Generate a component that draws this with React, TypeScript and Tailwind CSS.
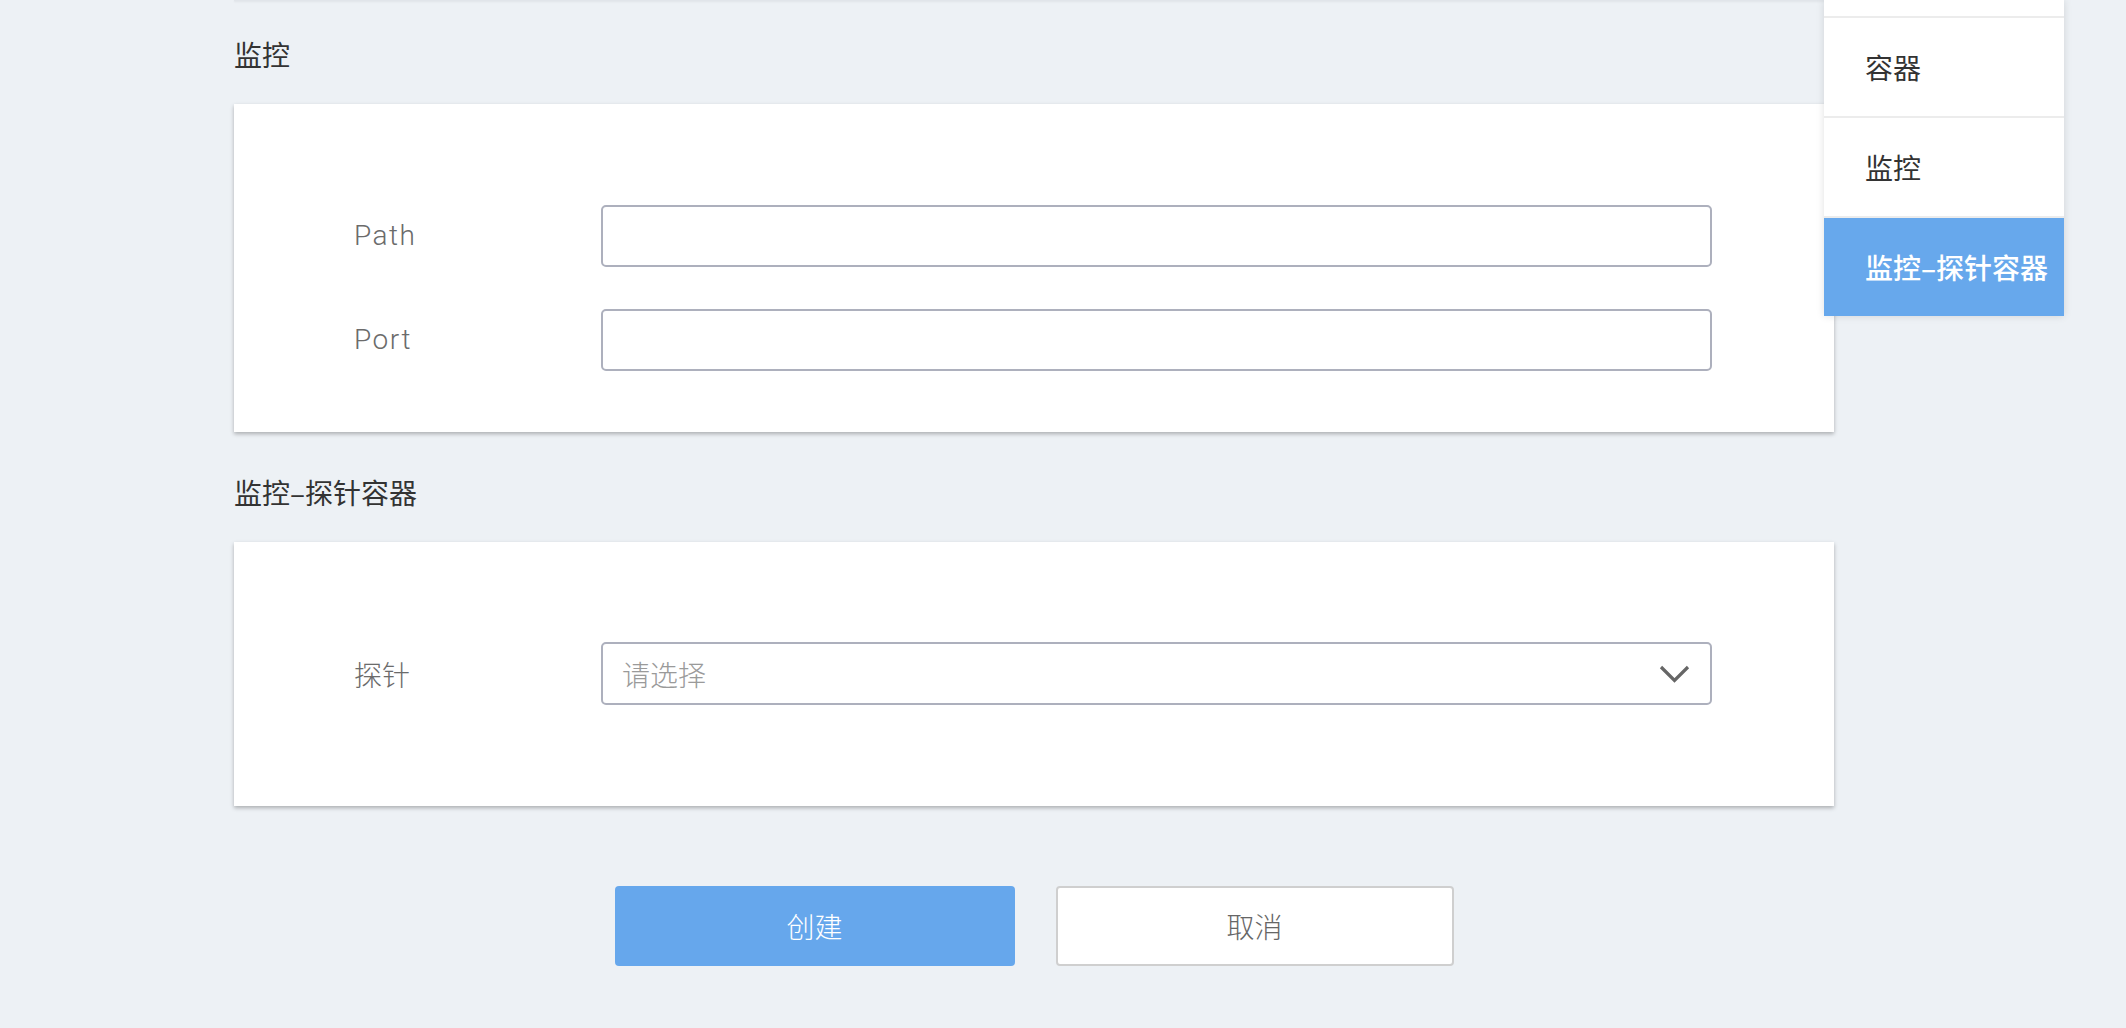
import React from "react";

const cjk = { fontFamily: '"Noto Sans CJK SC", "Noto Sans", sans-serif' };
const latin = { fontFamily: 'Roboto, "Noto Sans CJK SC", sans-serif' };

function Field({ label, latinLabel }: { label: string; latinLabel?: boolean }) {
  return (
    <div className="flex items-center">
      <div
        className="w-[367px] shrink-0 pl-[120px] text-[28px] font-light text-[#6b6b6b] tracking-[1.5px]"
        style={latinLabel ? latin : cjk}
      >
        {label}
      </div>
      <div className="h-[62px] w-[1111px] shrink-0 rounded-[5px] border-2 border-[#adb0bd] bg-white" />
    </div>
  );
}

export default function App() {
  return (
    <div className="relative h-[1028px] w-full overflow-hidden bg-[#edf1f5]" style={cjk}>
      <div className="ml-[234px] h-[1px] w-[1600px] bg-[#e1e5ea] shadow-[0_1px_2px_rgba(0,0,0,0.08)]" />

      <div className="ml-[234px] w-[1600px]">
        <div className="mt-[39px] h-[28px] text-[28px] leading-[28px] text-[#333]">监控</div>

        <div className="mt-[36px] bg-white pt-[101px] pb-[61px] shadow-[0_2px_4px_rgba(0,0,0,0.28)]">
          <div className="flex flex-col gap-[42px]">
            <Field label="Path" latinLabel />
            <Field label="Port" latinLabel />
          </div>
        </div>

        <div className="mt-[46px] h-[28px] text-[28px] leading-[28px] text-[#333]">监控–探针容器</div>

        <div className="mt-[36px] bg-white pt-[100px] pb-[101px] shadow-[0_2px_4px_rgba(0,0,0,0.28)]">
          <div className="flex items-center">
            <div className="w-[367px] shrink-0 pl-[120px] text-[28px] font-light text-[#6b6b6b]">探针</div>
            <div className="flex h-[63px] w-[1111px] shrink-0 items-center justify-between rounded-[5px] border-2 border-[#adb0bd] bg-white pl-[19px] pr-[20px]">
              <span className="text-[28px] font-light text-[#9a9a9a]">请选择</span>
              <svg width="31" height="18" viewBox="0 0 31 18" fill="none">
                <path d="M2 2 L15.5 15.5 L29 2" stroke="#666" strokeWidth="3.2" strokeLinejoin="miter" />
              </svg>
            </div>
          </div>
        </div>

        <div className="mt-[80px] flex justify-center gap-[41px]">
          <button className="flex h-[80px] w-[400px] items-center justify-center rounded-[4px] bg-[#66a7ec] text-[28px] font-light text-white">
            创建
          </button>
          <button className="flex h-[80px] w-[398px] items-center justify-center rounded-[4px] border-2 border-[#cfcfcf] bg-white text-[28px] font-light text-[#666]">
            取消
          </button>
        </div>
      </div>

      <div className="absolute left-[1824px] top-0 flex w-[240px] flex-col gap-[2px] bg-[#ececec] shadow-[0_0_8px_rgba(0,0,0,0.12)]">
        <div className="h-[16px] bg-white" />
        <div className="flex h-[98px] items-center bg-white pl-[41px] text-[28px] text-[#333]">容器</div>
        <div className="flex h-[98px] items-center bg-white pl-[41px] text-[28px] text-[#333]">监控</div>
        <div className="flex h-[98px] items-center bg-[#67a8ec] pl-[41px] text-[28px] font-medium text-white">
          监控–探针容器
        </div>
      </div>
    </div>
  );
}
